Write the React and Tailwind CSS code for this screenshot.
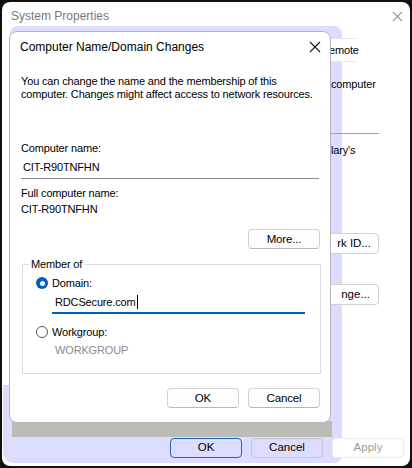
import React from "react";

const ui = { fontFamily: '"Liberation Sans", Arial, sans-serif' };

function Btn({ children, className = "" }) {
  return (
    <div
      className={`flex items-center justify-center rounded-[4px] border border-[#d2d2d2] border-b-[#b8b8b8] bg-[#fdfdfd] text-[11.5px] text-black ${className}`}
    >
      {children}
    </div>
  );
}

function CloseX({ color = "#1a1a1a", size = 12 }) {
  return (
    <svg width={size} height={size} viewBox="0 0 12 12">
      <path d="M1 1 L11 11 M11 1 L1 11" stroke={color} strokeWidth="1.1" />
    </svg>
  );
}

export default function App() {
  return (
    <div className="relative w-[412px] h-[468px] overflow-hidden bg-[#101010]" style={ui}>
      {/* System Properties window behind */}
      <div className="absolute left-[2px] top-[2px] w-[408px] h-[464px] rounded-[8px] bg-white">
        {/* ghost frame left by dragging the dialog */}
        <div className="absolute left-[8px] top-[24px] w-[332px] h-[437px] rounded-[8px] bg-[#dcdcfc]" />
        <div className="absolute left-[1px] top-[383px] w-[20px] h-[78px] rounded-bl-[10px] bg-[#dcdcfc]" />
        <div className="absolute left-[10px] top-[419px] w-[320px] h-[16px] bg-[#bcbcb6]" />

        <div className="relative flex items-center justify-between h-[28px] pl-[9px] pr-[7px]">
          <span className="text-[12px] text-[#7a7a7a]">System Properties</span>
          <CloseX color="#8a8a8a" size={11} />
        </div>
        <div className="absolute left-[327px] top-[36px] w-[27px] h-[24px] border-t border-b border-[#e4e4f4] bg-white flex items-center text-[11px] tracking-[-0.15px] text-black">
          emote
        </div>
        <div className="absolute left-[329px] top-[74px] text-[11px] tracking-[-0.15px] text-black">computer</div>
        <div className="absolute left-[329px] top-[131px] w-[48px] border-t border-[#a0a0a0]" />
        <div className="absolute left-[329px] top-[140px] text-[11px] tracking-[-0.15px] text-black">lary's</div>
        <div className="absolute left-[320px] top-[231px] w-[57px] h-[21px] rounded-[4px] border border-[#d2d2d2] bg-white flex items-center justify-end pr-[7px] text-[11.5px] text-black">
          rk ID...
        </div>
        <div className="absolute left-[320px] top-[282px] w-[57px] h-[21px] rounded-[4px] border border-[#d2d2d2] bg-white flex items-center justify-end pr-[8px] text-[11.5px] text-black">
          nge...
        </div>

        {/* outer buttons */}
        <div className="absolute left-[168px] top-[436px] flex gap-[9px]">
          <div className="flex items-center justify-center w-[72px] h-[20px] rounded-[4px] border border-[#2464b4] text-[11.5px] text-black">
            OK
          </div>
          <div className="flex items-center justify-center w-[72px] h-[20px] rounded-[4px] border border-[#c6c6d6] text-[11.5px] text-black">
            Cancel
          </div>
          <div className="flex items-center justify-center w-[72px] h-[20px] rounded-[4px] border border-[#ececec] bg-white text-[11.5px] text-[#9a9a9a]">
            Apply
          </div>
        </div>
      </div>

      {/* Computer Name/Domain Changes dialog */}
      <div className="absolute left-[9px] top-[31px] w-[322px] h-[392px] rounded-[8px] border border-[#b4b4c4] bg-white">
        <div className="flex items-center justify-between h-[30px] pl-[10px] pr-[9px]">
          <span className="text-[12px] text-black">Computer Name/Domain Changes</span>
          <CloseX />
        </div>

        <div className="px-[11px] pt-[13px] text-[11px] tracking-[-0.15px] leading-[13px] text-black whitespace-nowrap">
          <p>You can change the name and the membership of this</p>
          <p>computer. Changes might affect access to network resources.</p>

          <div className="mt-[41px]">Computer name:</div>
          <div className="mt-[5px] w-[298px] h-[19px] border-b border-[#8a8a8a] pl-[2px] leading-[14px]">CIT-R90TNFHN</div>

          <div className="mt-[8px]">Full computer name:</div>
          <div className="mt-[3px]">CIT-R90TNFHN</div>

          <div className="mt-[13px] flex justify-end w-[299px]">
            <Btn className="w-[72px] h-[20px]">More...</Btn>
          </div>

          {/* Member of group */}
          <div className="relative mt-[15px] ml-[1px] w-[299px] h-[110px] border border-[#dcdcdc]">
            <span className="absolute left-[6px] top-[-8px] bg-white px-[2px] leading-[14px]">Member of</span>
            <div className="pl-[13px] pt-[11px]">
              <div className="flex items-center gap-[4px] h-[14px]">
                <span className="flex items-center justify-center w-[12px] h-[12px] rounded-full bg-[#005fb8]">
                  <span className="w-[5px] h-[5px] rounded-full bg-white" />
                </span>
                <span>Domain:</span>
              </div>
              <div className="ml-[16px] mt-[5px] w-[253px] h-[19px] border-b-2 border-[#005fb8] pl-[3px] leading-[14px] flex items-start">
                RDCSecure.com<span className="inline-block w-px h-[14px] bg-black ml-[1px]" />
              </div>
              <div className="flex items-center gap-[4px] h-[14px] mt-[11px]">
                <span className="w-[12px] h-[12px] rounded-full border border-[#555555] bg-white" />
                <span>Workgroup:</span>
              </div>
              <div className="ml-[19px] mt-[5px] text-[#8a8a8a]">WORKGROUP</div>
            </div>
          </div>

          <div className="mt-[14px] flex justify-end gap-[9px] w-[299px]">
            <Btn className="w-[72px] h-[20px]">OK</Btn>
            <Btn className="w-[72px] h-[20px]">Cancel</Btn>
          </div>
        </div>
      </div>
    </div>
  );
}
